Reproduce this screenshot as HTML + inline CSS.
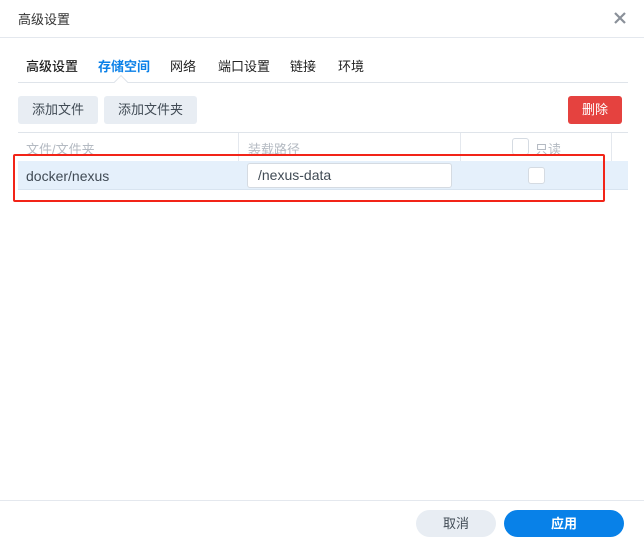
<!DOCTYPE html><html><head><meta charset="utf-8"><style>
*{box-sizing:border-box;margin:0;padding:0}
body{width:644px;height:547px;background:#fff;font-family:"Liberation Sans","Noto Sans CJK SC",sans-serif;position:relative;overflow:hidden;color:#333}
.a{position:absolute}
.btn{position:absolute;background:#e8edf3;border-radius:3px;font-size:13px;color:#414b55;text-align:center;line-height:28px}
</style></head><body>
<div class="a" style="left:18px;top:9px;font-size:13px;color:#333">高级设置</div>
<svg class="a" style="left:614px;top:12px" width="12" height="12"><path d="M1 1L11 11M11 1L1 11" stroke="#8a9099" stroke-width="2.2"/></svg>
<div class="a" style="left:0;top:37px;width:644px;height:1px;background:#e4e8ee"></div>
<div class="a" style="top:56px;left:26px;font-size:13px;color:#222;font-weight:500">高级设置</div>
<div class="a" style="top:56px;left:98px;font-size:13px;color:#0a80e8;font-weight:bold">存储空间</div>
<div class="a" style="top:56px;left:170px;font-size:13px;color:#222">网络</div>
<div class="a" style="top:56px;left:218px;font-size:13px;color:#222">端口设置</div>
<div class="a" style="top:56px;left:290px;font-size:13px;color:#222">链接</div>
<div class="a" style="top:56px;left:338px;font-size:13px;color:#222">环境</div>
<div class="a" style="left:18px;top:82px;width:610px;height:1px;background:#dfe4ea"></div>
<div class="a" style="left:116px;top:77px;width:10px;height:10px;background:#fff;border-left:1px solid #dfe4ea;border-top:1px solid #dfe4ea;transform:rotate(45deg)"></div>
<div class="btn" style="left:18px;top:96px;width:80px">添加文件</div>
<div class="btn" style="left:104px;top:96px;width:93px">添加文件夹</div>
<div class="btn" style="left:568px;top:96px;width:54px;background:#e5423f;color:#fff">删除</div>
<div class="a" style="left:18px;top:132px;width:610px;height:1px;background:#dfe4ea"></div>
<div class="a" style="left:238px;top:133px;width:1px;height:28px;background:#e4e8ee"></div>
<div class="a" style="left:460px;top:133px;width:1px;height:28px;background:#e4e8ee"></div>
<div class="a" style="left:611px;top:133px;width:1px;height:28px;background:#e4e8ee"></div>
<div class="a" style="left:26px;top:139px;font-size:13px;color:#b4bac2">文件/文件夹</div>
<div class="a" style="left:248px;top:139px;font-size:13px;color:#b4bac2">装载路径</div>
<div class="a" style="left:512px;top:138px;width:17px;height:17px;border:1px solid #d5dbe2;border-radius:3px"></div>
<div class="a" style="left:535px;top:139px;font-size:13px;color:#b4bac2">只读</div>
<div class="a" style="left:18px;top:161px;width:610px;height:29px;background:#e5f0fb;border-bottom:1px solid #d8e4f0"></div>
<div class="a" style="left:26px;top:168px;font-size:14px;color:#414b55">docker/nexus</div>
<div class="a" style="left:247px;top:163px;width:205px;height:25px;background:#fff;border:1px solid #d5dbe2;border-radius:3px;font-size:14px;color:#414b55;padding-left:10px;line-height:23px">/nexus-data</div>
<div class="a" style="left:528px;top:167px;width:17px;height:17px;background:#fff;border:1px solid #d5dbe2;border-radius:3px"></div>
<div class="a" style="left:13px;top:154px;width:592px;height:48px;border:2px solid #f22418;border-radius:2px"></div>
<div class="a" style="left:0;top:500px;width:644px;height:1px;background:#e4e8ee"></div>
<div class="btn" style="left:416px;top:510px;width:80px;height:27px;border-radius:14px;line-height:27px">取消</div>
<div class="btn" style="left:504px;top:510px;width:120px;height:27px;border-radius:14px;line-height:27px;background:#0881e8;color:#fff;font-weight:bold">应用</div>
</body></html>
